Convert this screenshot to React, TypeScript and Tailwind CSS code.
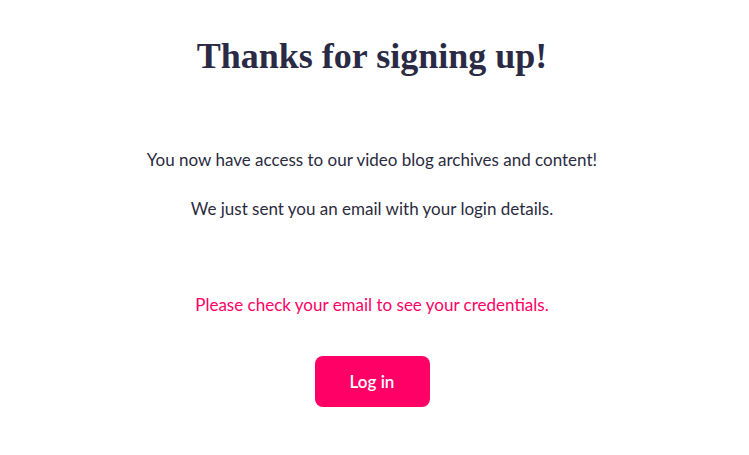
export default function App() {
  return (
    <div className="min-h-[455px] w-full bg-white flex flex-col items-center pr-[5px]">
      <h1 className="mt-[35px] text-[36px] leading-[42px] font-bold text-[#2a2a45] font-['Liberation_Serif',serif]">
        Thanks for signing up!
      </h1>
      <div className="mt-[71px] flex flex-col items-center text-[17px] leading-[24px] text-[#2b2b40] font-['Lato',sans-serif]">
        <p>You now have access to our video blog archives and content!</p>
        <p className="mt-[25px]">We just sent you an email with your login details.</p>
        <p className="mt-[72px] text-[#ff0066]">Please check your email to see your credentials.</p>
      </div>
      <button className="mt-[39px] w-[115px] h-[51px] rounded-[8px] bg-[#ff0066] text-white text-[17px] font-semibold font-['Lato',sans-serif]">
        Log in
      </button>
    </div>
  )
}
